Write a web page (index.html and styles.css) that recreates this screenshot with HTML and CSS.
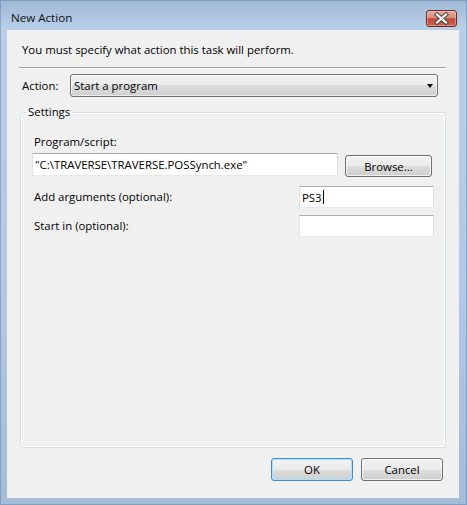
FILE: index.html
```html
<!DOCTYPE html>
<html lang="en">
<head>
    <meta charset="UTF-8">
    <meta name="viewport" content="width=device-width, initial-scale=1.0">
    <title>New Action</title>
    <link rel="stylesheet" href="styles.css">
</head>
<body>
  <div class="window">
    <div class="titlebar">
      <span class="title">New Action</span>
      <button class="close-btn" aria-label="Close">
        <svg width="31" height="17" viewBox="0 0 31 17">
          <path d="M11 4.5 L20 12.5 M20 4.5 L11 12.5" stroke="#4a4a4a" stroke-width="4.2" stroke-linecap="square" fill="none"/>
          <path d="M11 4.5 L20 12.5 M20 4.5 L11 12.5" stroke="#ffffff" stroke-width="2.2" stroke-linecap="square" fill="none"/>
        </svg>
      </button>
    </div>

    <div class="client">
      <p class="intro">You must specify what action this task will perform.</p>
      <hr class="separator">

      <div class="action-row">
        <label class="action-label">Action:</label>
        <div class="combo">
          <span>Start a program</span>
          <span class="arrow"></span>
        </div>
      </div>

      <fieldset class="settings">
        <legend>Settings</legend>
        <div class="settings-body">
          <label class="field-label">Program/script:</label>
          <div class="program-row">
            <div class="textbox program-input">"C:\TRAVERSE\TRAVERSE.POSSynch.exe"</div>
            <button class="btn browse">Browse...</button>
          </div>

          <div class="field-row">
            <label class="field-label">Add arguments (optional):</label>
            <div class="textbox short">PS3<span class="caret"></span></div>
          </div>

          <div class="field-row start-row">
            <label class="field-label">Start in (optional):</label>
            <div class="textbox short"></div>
          </div>
        </div>
      </fieldset>

      <div class="footer">
        <button class="btn default">OK</button>
        <button class="btn">Cancel</button>
      </div>
    </div>
  </div>
</body>
</html>
```

FILE: styles.css
```css
body{
    margin: 0;
    font-family: "Open Sans", "Noto Sans", sans-serif;
    font-size: 11.4px;
    color: #000;
}

.window{
    width: 467px;
    height: 505px;
    box-sizing: border-box;
    background: linear-gradient(to bottom, #9fb8d6 0px, #b8cfe9 28px, #b1c9e4 55%, #a3bcd8 100%);
    box-shadow: inset 0 0 0 1px rgba(70,100,140,0.35);
    display: flex;
    flex-direction: column;
}

.titlebar{
    height: 30px;
    box-sizing: border-box;
    padding: 10px 10px 0 11px;
    display: flex;
    align-items: flex-start;
}

.title{
    line-height: 16px;
    font-size: 11.6px;
    color: #111;
}

.close-btn{
    margin-left: auto;
    width: 31px;
    height: 17px;
    padding: 0;
    border: 1px solid #6b2b2b;
    border-radius: 3px;
    background: linear-gradient(to bottom, #e9ab9c 0%, #d98b7b 45%, #c14b36 52%, #cc6148 100%);
    box-shadow: inset 0 0 0 1px rgba(255,210,200,0.45);
    display: flex;
    align-items: center;
    justify-content: center;
}

.close-btn svg{
    display: block;
    margin: -1px;
}

.client{
    margin-left: 7px;
    width: 452px;
    height: 468px;
    box-sizing: border-box;
    background-color: #f0f0f0;
    padding: 12px 13px 17px 12px;
    display: flex;
    flex-direction: column;
}

.intro{
    margin: 0;
    padding-left: 3px;
    line-height: 16px;
}

.separator{
    margin: 9px 0 0 0;
    border: none;
    border-top: 1px solid #a0a0a0;
    border-bottom: 1px solid #ffffff;
    height: 0;
}

.action-row{
    margin-top: 5px;
    margin-right: 8px;
    display: flex;
    align-items: center;
}

.action-label{
    width: 51px;
    padding-left: 3px;
    box-sizing: border-box;
}

.combo{
    flex: 1;
    height: 23px;
    box-sizing: border-box;
    border: 1px solid #707070;
    border-radius: 3px;
    background: linear-gradient(to bottom, #f2f2f2 0%, #ebebeb 50%, #dddddd 50%, #cfcfcf 100%);
    box-shadow: inset 0 0 0 1px rgba(255,255,255,0.6);
    padding: 0 4px 0 3px;
    display: flex;
    align-items: center;
    justify-content: space-between;
}

.arrow{
    width: 0;
    height: 0;
    border-left: 3.5px solid transparent;
    border-right: 3.5px solid transparent;
    border-top: 4px solid #000;
    margin-top: 1px;
}

.settings{
    flex: 1;
    min-width: 0;
    margin: 7px 0 0 1px;
    padding: 0;
    border: 1px solid #d5dfe5;
    border-radius: 3px;
    box-shadow: inset 0 0 0 1px #ffffff;
}

.settings legend{
    margin-left: 5px;
    padding: 0 2px;
    line-height: 16px;
}

.settings-body{
    padding: 14px 11px 0 11px;
}

.field-label{
    display: block;
    padding-left: 2px;
    line-height: 16px;
}

.program-row{
    margin-top: 3px;
    display: flex;
    align-items: flex-start;
    gap: 7px;
}

.textbox{
    height: 22px;
    box-sizing: border-box;
    background: #fff;
    border: 1px solid;
    border-color: #abadb3 #dbdfe6 #e3e9ef #e2e3ea;
    padding: 0 2px;
    display: flex;
    align-items: center;
    white-space: nowrap;
}

.program-input{
    flex: 1;
    height: 23px;
}

.caret{
    display: inline-block;
    width: 1px;
    height: 14px;
    background: #000;
    margin-left: 1px;
}

.field-row{
    margin-top: 9px;
    display: flex;
    align-items: center;
    justify-content: space-between;
}

.field-row.start-row{
    margin-top: 7px;
}

.short{
    width: 135px;
}

.btn{
    font-family: inherit;
    font-size: inherit;
    color: #000;
    height: 23px;
    width: 82px;
    padding: 0;
    border: 1px solid #707070;
    border-radius: 3px;
    background: linear-gradient(to bottom, #f2f2f2 0%, #ebebeb 50%, #dddddd 50%, #cfcfcf 100%);
    box-shadow: inset 0 0 0 1px rgba(255,255,255,0.7);
}

.browse{
    width: 87px;
    height: 22px;
    margin-top: 2px;
    margin-right: 2px;
}

.btn.default{
    border-color: #3c8fd0;
    box-shadow: inset 0 0 0 1px #a8e2fb;
}

.footer{
    margin-top: 10px;
    margin-right: 3px;
    display: flex;
    justify-content: flex-end;
    gap: 8px;
}
```
